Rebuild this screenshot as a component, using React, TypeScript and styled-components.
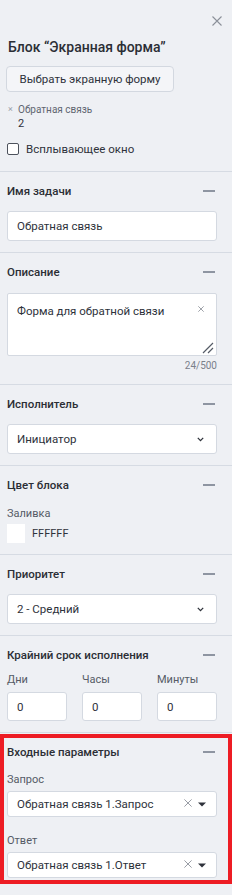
import React from 'react'
import styled, { createGlobalStyle } from 'styled-components'

const GlobalStyle = createGlobalStyle`
  html, body {
    margin: 0;
    padding: 0;
    background: #eef0f4;
  }
  body {
    font-family: Roboto, 'Noto Sans', 'Liberation Sans', sans-serif;
    color: #2e323b;
    -webkit-font-smoothing: antialiased;
  }
  * {
    box-sizing: border-box;
  }
`

// мелкие иконки рисуем руками
const CloseIcon = ({ size = 10, stroke = '#8b9099' }: { size?: number; stroke?: string }) => (
  <svg width={size} height={size} viewBox='0 0 10 10' fill='none'>
    <path d='M0.5 0.5 L9.5 9.5 M9.5 0.5 L0.5 9.5' stroke={stroke} strokeWidth='1.1' />
  </svg>
)

const Chevron = () => (
  <svg width='7' height='5' viewBox='0 0 7 5' fill='none'>
    <path d='M0.8 0.9 L3.5 3.6 L6.2 0.9' stroke='#2e323b' strokeWidth='1.3' />
  </svg>
)

const Caret = () => (
  <svg width='8' height='5' viewBox='0 0 8 5'>
    <path d='M0 0.5 H8 L4 4.5 Z' fill='#2e323b' />
  </svg>
)

const ResizeGrip = () => (
  <svg width='12' height='12' viewBox='0 0 12 12' fill='none'>
    <path d='M1 11 L11 1 M6 11 L11 6' stroke='#555b66' strokeWidth='1.2' />
  </svg>
)

type SectionProps = {
  title: string
  gap?: number
  highlight?: boolean
  children: React.ReactNode
}

function Section({ title, gap = 12, highlight, children }: SectionProps) {
  return (
    <SectionBox $highlight={highlight}>
      <SectionHead $gap={gap}>
        <SectionTitle>{title}</SectionTitle>
        <Collapse />
      </SectionHead>
      {children}
    </SectionBox>
  )
}

export default function App() {
  return (
    <>
      <GlobalStyle />
      <Panel>
        <Header>
          <CloseRow>
            <CloseButton type='button'>
              <CloseIcon />
            </CloseButton>
          </CloseRow>
          <Title>Блок “Экранная форма”</Title>
          <PickButton type='button'>Выбрать экранную форму</PickButton>
          <Chosen>
            <ChosenName>
              <ChosenX>×</ChosenX>
              Обратная связь
            </ChosenName>
            <ChosenId>2</ChosenId>
          </Chosen>
          <CheckRow>
            <CheckBox />
            <span>Всплывающее окно</span>
          </CheckRow>
        </Header>

        <Section title='Имя задачи'>
          <Field $height={30}>Обратная связь</Field>
        </Section>

        <Section title='Описание' gap={13}>
          <TextArea>
            <span>Форма для обратной связи</span>
            <AreaClear>
              <CloseIcon size={6} stroke='#6b717c' />
            </AreaClear>
            <Grip>
              <ResizeGrip />
            </Grip>
          </TextArea>
          <Counter>24/500</Counter>
        </Section>

        <Section title='Исполнитель'>
          <Field $height={30}>
            <Value>Инициатор</Value>
            <Chevron />
          </Field>
        </Section>

        <Section title='Цвет блока' gap={14}>
          <SmallLabel>Заливка</SmallLabel>
          <ColorRow>
            <Swatch />
            <span>FFFFFF</span>
          </ColorRow>
        </Section>

        <Section title='Приоритет'>
          <Field $height={30}>
            <Value>2 - Средний</Value>
            <Chevron />
          </Field>
        </Section>

        <Section title='Крайний срок исполнения' gap={10}>
          <TimeGrid>
            {['Дни', 'Часы', 'Минуты'].map((label) => (
              <TimeCell key={label}>
                <SmallLabel>{label}</SmallLabel>
                <Field $height={29}>0</Field>
              </TimeCell>
            ))}
          </TimeGrid>
        </Section>

        <Section title='Входные параметры' gap={13} highlight>
          <SmallLabel>Запрос</SmallLabel>
          <ComboField $height={26}>
            <Value>Обратная связь 1.Запрос</Value>
            <ClearX>
              <CloseIcon size={8} stroke='#8b9099' />
            </ClearX>
            <Caret />
          </ComboField>
          <SmallLabel $top={17}>Ответ</SmallLabel>
          <ComboField $height={26}>
            <Value>Обратная связь 1.Ответ</Value>
            <ClearX>
              <CloseIcon size={8} stroke='#8b9099' />
            </ClearX>
            <Caret />
          </ComboField>
        </Section>
      </Panel>
    </>
  )
}

const Panel = styled.aside`
  width: 232px;
  min-height: 895px;
  background: #eef0f4;
  display: flex;
  flex-direction: column;
`

const Header = styled.header`
  display: flex;
  flex-direction: column;
  padding: 16px 15px 15px 7px;
  border-bottom: 1px solid #d6dbe3;
`

const CloseRow = styled.div`
  display: flex;
  justify-content: flex-end;
  height: 10px;
  margin-right: -5px;
`

const CloseButton = styled.button`
  border: 0;
  padding: 0;
  background: transparent;
  width: 10px;
  height: 10px;
  display: flex;
  cursor: pointer;
`

const Title = styled.h2`
  margin: 12px 0 0 1px;
  font-size: 14px;
  line-height: 18px;
  font-weight: 500;
  color: #2b2e35;
`

const PickButton = styled.button`
  margin-top: 10px;
  align-self: flex-start;
  margin-left: -1px;
  width: 168px;
  height: 26px;
  border: 1px solid #d3d8e0;
  border-radius: 4px;
  background: #f4f5f8;
  font-family: inherit;
  font-size: 11.5px;
  color: #2e323b;
  padding: 0;
`

const Chosen = styled.div`
  margin-top: 11px;
  display: flex;
  flex-direction: column;
  font-size: 10px;
  line-height: 13px;
  color: #5f6570;
`

const ChosenName = styled.div`
  display: flex;
  align-items: center;
`

const ChosenX = styled.span`
  width: 10px;
  margin-left: 1px;
  color: #9aa0aa;
  font-size: 9px;
`

const ChosenId = styled.div`
  padding-left: 11px;
  color: #2e323b;
  font-size: 11px;
  margin-top: 1px;
`

const CheckRow = styled.label`
  margin-top: 12px;
  display: flex;
  align-items: center;
  gap: 7px;
  height: 14px;
  font-size: 11.5px;
  color: #2e323b;
`

const CheckBox = styled.span`
  width: 12px;
  height: 12px;
  border: 1px solid #4d525c;
  border-radius: 2px;
  background: #fff;
`

const SectionBox = styled.section<{ $highlight?: boolean }>`
  display: flex;
  flex-direction: column;
  padding: 11px 15px 11px 7px;
  border-bottom: 1px solid #d6dbe3;

  ${({ $highlight }) =>
    $highlight &&
    `
    margin-top: 1px;
    border: 4px solid #ed1c24;
    padding: 6px 11px 2px 3px;
  `}
`

const SectionHead = styled.div<{ $gap: number }>`
  display: flex;
  align-items: center;
  justify-content: space-between;
  height: 16px;
  margin-bottom: ${({ $gap }) => $gap}px;
`

const SectionTitle = styled.h3`
  margin: 0;
  font-size: 11.5px;
  line-height: 16px;
  font-weight: 500;
  color: #2b2e35;
`

const Collapse = styled.span`
  width: 12px;
  height: 1.5px;
  background: #8e95a1;
  margin-right: 2px;
`

const Field = styled.div<{ $height: number }>`
  height: ${({ $height }) => $height}px;
  display: flex;
  align-items: center;
  padding: 0 12px 0 9px;
  background: #fff;
  border: 1px solid #d4d9e1;
  border-radius: 3px;
  font-size: 11.5px;
  color: #2e323b;
`

const ComboField = styled(Field)`
  padding-right: 10px;
`

const Value = styled.span`
  flex: 1;
  white-space: nowrap;
  overflow: hidden;
`

const ClearX = styled.span`
  display: flex;
  margin-right: 6px;
  margin-top: -2px;
`

const TextArea = styled.div`
  position: relative;
  height: 63px;
  padding: 9px 9px;
  background: #fff;
  border: 1px solid #d4d9e1;
  border-radius: 2px;
  font-size: 11.5px;
  line-height: 16px;
  color: #2e323b;
`

const AreaClear = styled.span`
  position: absolute;
  top: 12px;
  right: 12px;
  display: flex;
`

const Grip = styled.span`
  position: absolute;
  right: 2px;
  bottom: 1px;
  display: flex;
`

const Counter = styled.div`
  margin-top: 3px;
  text-align: right;
  font-size: 10px;
  line-height: 14px;
  color: #7a808b;
`

const SmallLabel = styled.div<{ $top?: number }>`
  font-size: 11px;
  line-height: 14px;
  color: #555b66;
  margin-top: ${({ $top = 0 }) => $top}px;
  margin-bottom: 4px;
`

const ColorRow = styled.div`
  display: flex;
  align-items: center;
  gap: 7px;
  margin-top: -1px;
  font-size: 11px;
  color: #2e323b;
`

const Swatch = styled.span`
  width: 18px;
  height: 19px;
  background: #fff;
`

const TimeGrid = styled.div`
  display: grid;
  grid-template-columns: repeat(3, 1fr);
  column-gap: 15px;
`

const TimeCell = styled.div`
  display: flex;
  flex-direction: column;

  & > div:first-child {
    margin-bottom: 5px;
  }
`
